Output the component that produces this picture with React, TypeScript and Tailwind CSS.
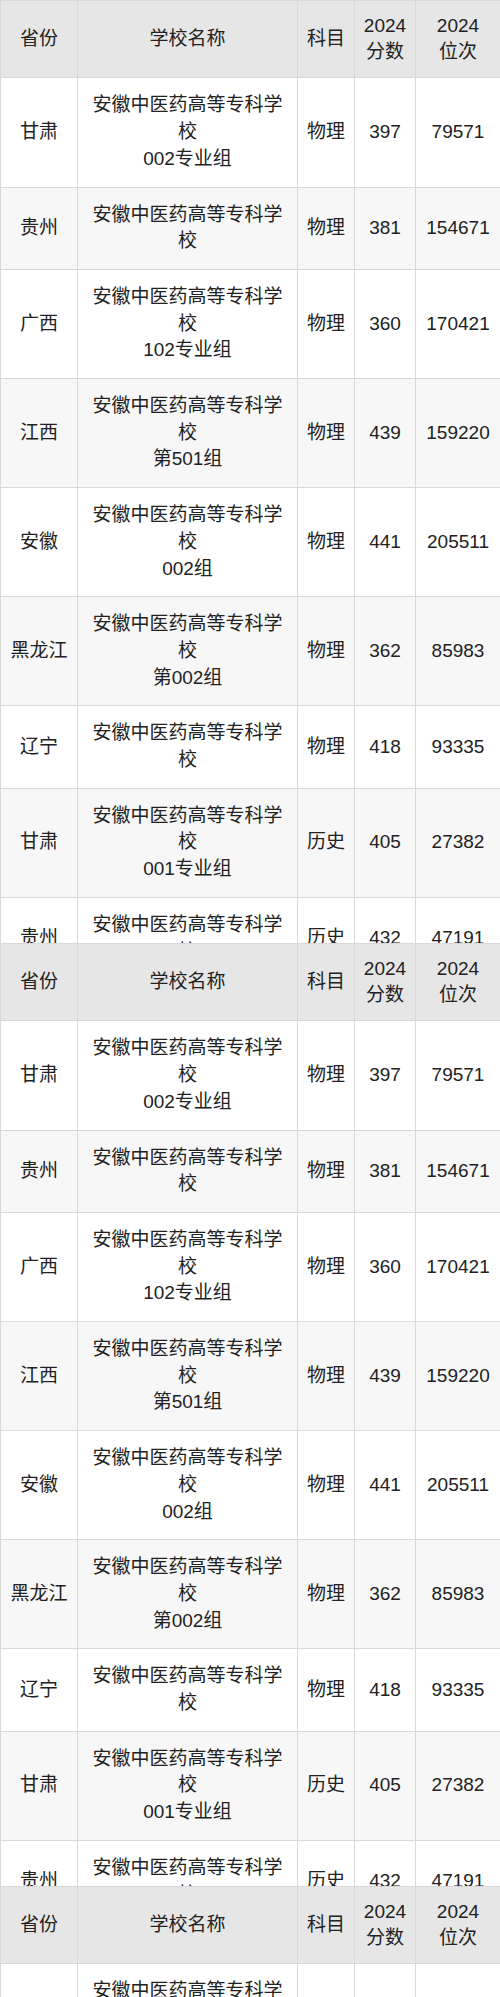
const rows = [
  { province: "甘肃", group: "002专业组", subject: "物理", score: "397", rank: "79571" },
  { province: "贵州", group: "", subject: "物理", score: "381", rank: "154671" },
  { province: "广西", group: "102专业组", subject: "物理", score: "360", rank: "170421" },
  { province: "江西", group: "第501组", subject: "物理", score: "439", rank: "159220" },
  { province: "安徽", group: "002组", subject: "物理", score: "441", rank: "205511" },
  { province: "黑龙江", group: "第002组", subject: "物理", score: "362", rank: "85983" },
  { province: "辽宁", group: "", subject: "物理", score: "418", rank: "93335" },
  { province: "甘肃", group: "001专业组", subject: "历史", score: "405", rank: "27382" },
  { province: "贵州", group: "", subject: "历史", score: "432", rank: "47191" },
];

const school = "安徽中医药高等专科学校";

function ScoreTable() {
  const cell = "border border-[#d9d9d9] px-[8px] py-[14px] text-center align-middle";
  const head = "border border-[#d9d9d9] px-[6px] py-[11.5px] text-center align-middle font-normal";

  return (
    <table className="w-[500px] table-fixed border-collapse">
      <colgroup>
        <col className="w-[77px]" />
        <col className="w-[220px]" />
        <col className="w-[57px]" />
        <col className="w-[61px]" />
        <col className="w-[85px]" />
      </colgroup>
      <thead>
        <tr className="bg-[#e6e6e6]">
          <th className={head}>省份</th>
          <th className={head}>学校名称</th>
          <th className={head}>科目</th>
          <th className={head}>
            2024
            <br />
            分数
          </th>
          <th className={head}>
            2024
            <br />
            位次
          </th>
        </tr>
      </thead>
      <tbody>
        {rows.map((r, i) => (
          <tr key={i} className={i % 2 === 1 ? "bg-[#f7f7f7]" : "bg-white"}>
            <td className={cell}>{r.province}</td>
            <td className={cell}>
              {school}
              {r.group && (
                <>
                  <br />
                  {r.group}
                </>
              )}
            </td>
            <td className={cell}>{r.subject}</td>
            <td className={cell}>{r.score}</td>
            <td className={cell}>{r.rank}</td>
          </tr>
        ))}
      </tbody>
    </table>
  );
}

export default function App() {
  return (
    <div
      className="w-[500px] h-[1997px] overflow-hidden bg-white text-[19px] leading-[26.7px] text-[#222]"
      style={{ fontFamily: '"Liberation Sans", "Noto Sans CJK SC", sans-serif' }}
    >
      <div className="h-[943px] overflow-hidden">
        <ScoreTable />
      </div>
      <div className="h-[943px] overflow-hidden">
        <ScoreTable />
      </div>
      <div className="h-[111px] overflow-hidden">
        <ScoreTable />
      </div>
    </div>
  );
}
